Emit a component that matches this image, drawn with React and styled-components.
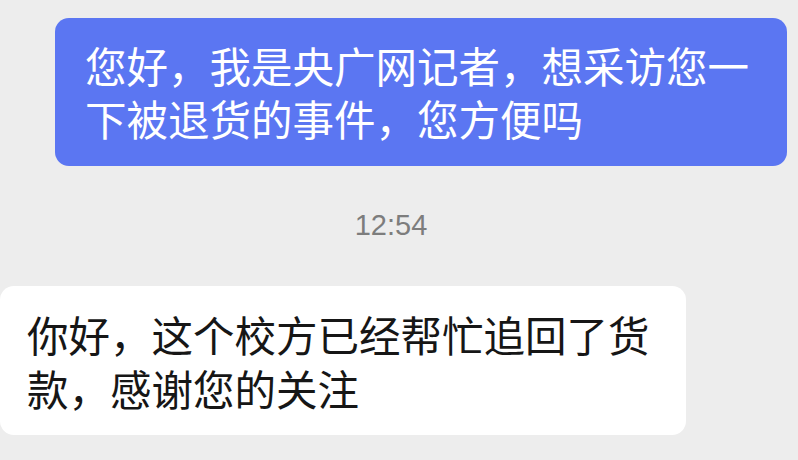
import React from "react";
import styled, { createGlobalStyle } from "styled-components";

const GlobalStyle = createGlobalStyle`
  html, body {
    margin: 0;
    padding: 0;
    background: #ededed;
  }
  body {
    font-family: "Noto Sans CJK SC", "Noto Sans", sans-serif;
  }
`;

const ChatPage = styled.div`
  width: 798px;
  height: 460px;
  overflow: hidden;
  padding-top: 18px;
  box-sizing: border-box;
  display: flex;
  flex-direction: column;
`;

const MessageRow = styled.div`
  display: flex;
  justify-content: ${(p) => (p.$mine ? "flex-end" : "flex-start")};
  padding-right: ${(p) => (p.$mine ? "11px" : "0")};
`;

const Bubble = styled.div`
  box-sizing: content-box;
  max-width: ${(p) => p.$width}px;
  padding: ${(p) => (p.$mine ? "21px 37px 21px 30px" : "21px 35px 20px 27px")};
  border-radius: 14px;
  background: ${(p) => (p.$mine ? "#5b76f2" : "#ffffff")};
  color: ${(p) => (p.$mine ? "#ffffff" : "#161616")};
  font-size: 41.5px;
  line-height: ${(p) => (p.$mine ? "53px" : "54px")};
  word-break: break-all;
`;

const TimeStamp = styled.div`
  margin: 42px 0 44px;
  padding-right: 16px;
  text-align: center;
  font-family: "Liberation Sans", Arial, sans-serif;
  font-size: 29px;
  line-height: 34px;
  color: #7d7d7d;
`;

export default function App() {
  return (
    <>
      <GlobalStyle />
      <ChatPage>
        <MessageRow $mine>
          <Bubble $mine $width={665}>
            您好，我是央广网记者，想采访您一下被退货的事件，您方便吗
          </Bubble>
        </MessageRow>
        <TimeStamp>12:54</TimeStamp>
        <MessageRow>
          <Bubble $width={624}>
            你好，这个校方已经帮忙追回了货款，感谢您的关注
          </Bubble>
        </MessageRow>
      </ChatPage>
    </>
  );
}
